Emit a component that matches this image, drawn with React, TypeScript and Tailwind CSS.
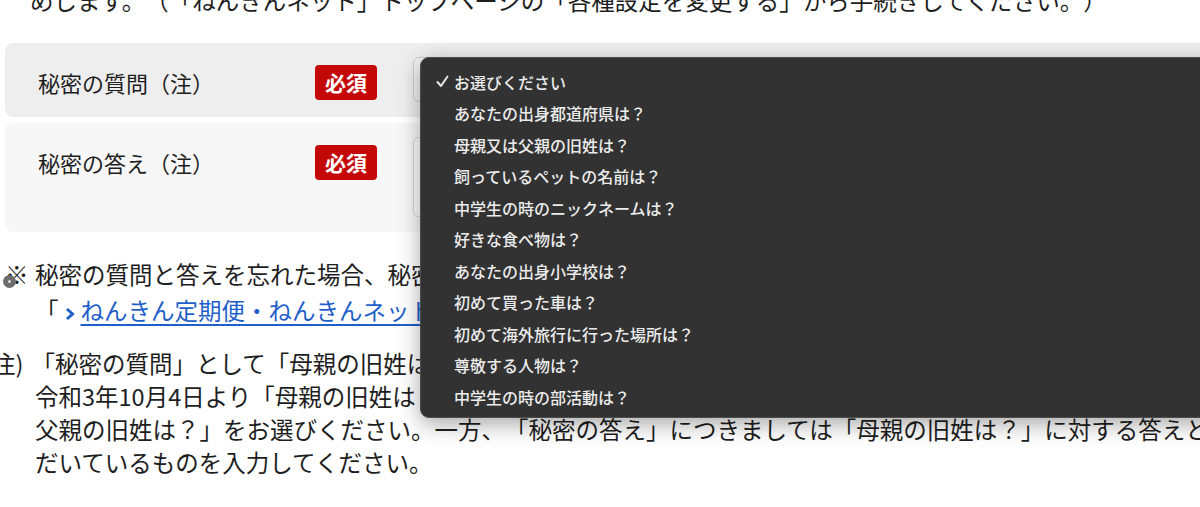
import React from "react";

const questions = [
  "あなたの出身都道府県は？",
  "母親又は父親の旧姓は？",
  "飼っているペットの名前は？",
  "中学生の時のニックネームは？",
  "好きな食べ物は？",
  "あなたの出身小学校は？",
  "初めて買った車は？",
  "初めて海外旅行に行った場所は？",
  "尊敬する人物は？",
  "中学生の時の部活動は？",
];

function Required() {
  return (
    <span className="mt-[8px] flex h-[35px] w-[62px] shrink-0 items-center justify-center rounded-[4px] bg-[#c40808] text-[21px] font-bold leading-none text-white">
      必須
    </span>
  );
}

function Chevron() {
  return (
    <svg width="10" height="14" viewBox="0 0 10 14" className="mx-[6px] inline-block align-[-1px]">
      <polyline points="2,2 7.5,7 2,12" fill="none" stroke="#1f5fc9" strokeWidth="3" strokeLinejoin="miter" />
    </svg>
  );
}

function Check() {
  return (
    <svg width="13" height="13" viewBox="0 0 13 13">
      <polyline points="1.5,7 5,11 11.5,1.5" fill="none" stroke="#e6e6e6" strokeWidth="2" strokeLinecap="round" strokeLinejoin="round" />
    </svg>
  );
}

export default function App() {
  return (
    <div
      className="relative h-[507px] w-[1200px] overflow-hidden bg-white text-[#1e1e1e] [text-spacing-trim:space-all]"
      style={{ fontFamily: '"Noto Sans CJK JP", "Noto Sans", sans-serif' }}
    >
      <p className="ml-[30px] mt-[-16px] whitespace-nowrap text-[23.5px] leading-[33px]">
        めします。（「ねんきんネット」トップページの「各種設定を変更する」から手続きしてください。）
      </p>

      <div className="ml-[5px] mt-[26px] flex w-[1240px] flex-col gap-[6px]">
        <div className="flex h-[74px] items-start rounded-[8px] bg-[#eeeeee] pt-[14px]">
          <div className="w-[310px] shrink-0 pl-[33px] text-[22px] leading-[50px]">秘密の質問（注）</div>
          <Required />
          <div className="ml-[36px] h-[45px] flex-1 rounded-[6px] border border-[#cfcfcf] bg-[#f3f3f3]" />
        </div>
        <div className="flex h-[109px] items-start rounded-[8px] bg-[#f7f7f7] pt-[14px]">
          <div className="w-[310px] shrink-0 pl-[33px] text-[22px] leading-[50px]">秘密の答え（注）</div>
          <Required />
          <div className="ml-[36px] h-[80px] flex-1 rounded-[6px] border border-[#d6d6d6] bg-[#fcfcfc]" />
        </div>
      </div>

      <div className="relative mt-[24px] flex whitespace-nowrap text-[23.5px] leading-[36px]">
        <span className="w-[35px] shrink-0 pl-[5px]">※</span>
        <div>
          <p>秘密の質問と答えを忘れた場合、秘密の質問と答えの再設定が必要です。</p>
          <p>
            「<Chevron />
            <a className="text-[#1f5fc9] underline underline-offset-[4px]">ねんきん定期便・ねんきんネット等の年金個人情報提供サービス</a>」
          </p>
        </div>
        <span className="absolute left-[3px] top-[19px] flex h-[13px] w-[13px] items-center justify-center rounded-full bg-[#6c6c6c]">
          <span className="h-[3px] w-[3px] rounded-full bg-[#d8d8d8]" />
        </span>
      </div>

      <div className="mt-[19px] whitespace-nowrap pl-[35px] text-[23.5px] leading-[33px]">
        <p className="-ml-[43px]">
          注)<span className="ml-[8px]">「秘密の質問」として「母親の旧姓は？」を選択されている方は、</span>
        </p>
        <p>令和3年10月4日より「母親の旧姓は？」の質問が選択できなくなりますので、「母親又は</p>
        <p>父親の旧姓は？」をお選びください。一方、「秘密の答え」につきましては「母親の旧姓は？」に対する答えと</p>
        <p>だいているものを入力してください。</p>
      </div>

      {/* open select menu */}
      <div className="absolute left-[420px] top-[57px] h-[361px] w-[820px] rounded-[9px] border border-[#4c4c4c] bg-[#323232] py-[8px] shadow-[0_6px_22px_rgba(0,0,0,0.35)]">
        <ul className="text-[16px] font-medium text-[#ececec]">
          <li className="flex h-[31.5px] items-center">
            <span className="flex w-[33px] justify-start pl-[15px]">
              <Check />
            </span>
            <span>お選びください</span>
          </li>
          {questions.map((q) => (
            <li key={q} className="flex h-[31.5px] items-center pl-[33px]">
              {q}
            </li>
          ))}
        </ul>
      </div>
    </div>
  );
}
